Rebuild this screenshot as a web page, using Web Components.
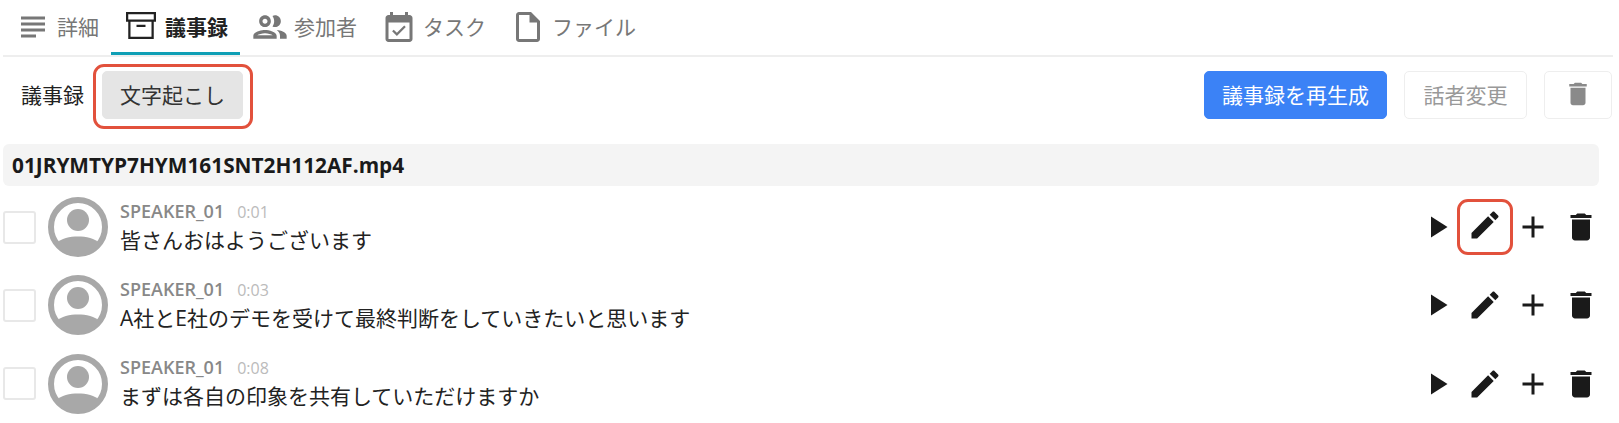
<!DOCTYPE html>
<html lang="ja">
<head>
<meta charset="utf-8">
<title>議事録</title>
<style>
  html, body { margin: 0; height: 423px; overflow: hidden; background: #fff; }
  body { font-family: "Open Sans", "Noto Sans CJK JP", sans-serif; color: #222; }
</style>
</head>
<body>
<minutes-page></minutes-page>

<script>
// Material style icon paths, all on a 24x24 box
const ICONS = {
  subject: 'M14 17H4v2h10v-2zm6-8H4v2h16V9zM4 15h16v-2H4v2zM4 5v2h16V5H4z',
  archive: 'M2 2h20v6.5h-1.5V20h-17V8.5H2V2zm1.5 1.5v3.5h17V3.5h-17zM5 8.5v10h14v-10H5zM9 10.5h6v1.5H9v-1.5z',
  people: 'M9 13.75c-2.34 0-7 1.17-7 3.5V19h14v-1.75c0-2.33-4.66-3.5-7-3.5zM4.34 17c.84-.58 2.87-1.25 4.66-1.25s3.82.67 4.66 1.25H4.34zM9 12c1.93 0 3.5-1.57 3.5-3.5S10.93 5 9 5 5.5 6.57 5.5 8.5 7.07 12 9 12zm0-5c.83 0 1.5.67 1.5 1.5S9.83 10 9 10s-1.5-.67-1.5-1.5S8.17 7 9 7zm7.04 6.81c1.16.84 1.96 1.96 1.96 3.44V19h4v-1.75c0-2.02-3.5-3.17-5.96-3.44zM15 12c1.93 0 3.5-1.57 3.5-3.5S16.93 5 15 5c-.54 0-1.04.13-1.5.35.63.89 1 1.98 1 3.15s-.37 2.26-1 3.15c.46.22.96.35 1.5.35z',
  event: 'M16.53 12.06L15.47 11l-4.88 4.88-2.12-2.12-1.06 1.06L10.59 18l5.94-5.94zM19 4h-1V2h-2v2H8V2H6v2H5c-1.11 0-1.99.9-1.99 2L3 20c0 1.1.89 2 2 2h14c1.1 0 2-.9 2-2V6c0-1.1-.9-2-2-2zm0 16H5V9h14v11z',
  file: 'M14 2H6c-1.1 0-1.99.9-1.99 2L4 20c0 1.1.89 2 1.99 2H18c1.1 0 2-.9 2-2V8l-6-6zM6 20V4h7v5h5v11H6z',
  trash: 'M6 19c0 1.1.9 2 2 2h8c1.1 0 2-.9 2-2V7H6v12zM19 4h-3.5l-1-1h-5l-1 1H5v2h14V4z',
  edit: 'M3 17.25V21h3.75L17.81 9.94l-3.75-3.75L3 17.25zM20.71 7.04c.39-.39.39-1.02 0-1.41l-2.34-2.34c-.39-.39-1.02-.39-1.41 0l-1.83 1.83 3.75 3.75 1.83-1.83z',
  play: 'M8 5v14l11-7z',
  add: 'M19 13h-6v6h-2v-6H5v-2h6V5h2v6h6v2z'
};

class UiIcon extends HTMLElement {
  connectedCallback() {
    const size = this.getAttribute('size') || 24;
    const root = this.shadowRoot || this.attachShadow({ mode: 'open' });
    root.innerHTML = `
      <style>
        :host { display: inline-flex; flex: none; }
        svg { display: block; fill: currentColor; }
      </style>
      <svg width="${size}" height="${size}" viewBox="0 0 24 24"><path d="${ICONS[this.getAttribute('name')]}"/></svg>
    `;
  }
}

class TabItem extends HTMLElement {
  connectedCallback() {
    const root = this.shadowRoot || this.attachShadow({ mode: 'open' });
    const name = this.getAttribute('icon');
    // the people glyph is drawn smaller in its box, so it gets a bigger box
    const size = name === 'people' ? 40 : 36;
    root.innerHTML = `
      <style>
        :host {
          display: flex;
          align-items: center;
          gap: 6px;
          height: 55px;
          box-sizing: border-box;
          padding: 2px 12px 0;
          font-size: 21px;
          white-space: nowrap;
          color: #777;
          border-bottom: 3px solid transparent;
        }
        :host([active]) {
          color: #222;
          font-weight: 700;
          border-bottom-color: #0f9fb5;
        }
        ui-icon[name="people"] { margin: 0 -2px; }
        .label { margin-bottom: 3px; }
      </style>
      <ui-icon name="${name}" size="${size}"></ui-icon>
      <span class="label"><slot></slot></span>
    `;
  }
}

class TabBar extends HTMLElement {
  constructor() {
    super();
    this.attachShadow({ mode: 'open' }).innerHTML = `
      <style>
        :host {
          display: flex;
          height: 57px;
          margin-left: 3px;
          margin-right: 6px;
          border-bottom: 2px solid #eee;
          box-sizing: border-box;
        }
      </style>
      <slot></slot>
    `;
  }
}

class ActionButton extends HTMLElement {
  constructor() {
    super();
    this.attachShadow({ mode: 'open' }).innerHTML = `
      <style>
        :host {
          display: flex;
          align-items: center;
          justify-content: center;
          box-sizing: border-box;
          height: 48px;
          padding-bottom: 2px;
          border-radius: 5px;
          font-size: 21px;
          white-space: nowrap;
          background: #fff;
          color: #999;
          border: 1px solid #eee;
        }
        :host([variant="primary"]) { background: #3b82f6; color: #fff; border-color: #3b82f6; }
        :host([variant="muted"]) { background: #e5e5e5; color: #333; border-color: #e5e5e5; }
      </style>
      <slot></slot>
    `;
  }
}

// Red annotation frame drawn round whatever it wraps
class MarkFrame extends HTMLElement {
  constructor() {
    super();
    this.attachShadow({ mode: 'open' }).innerHTML = `
      <style>
        :host { display: block; position: relative; }
        .frame {
          position: absolute;
          inset: var(--frame-inset, -8px);
          border: 3px solid #e2513c;
          border-radius: 11px;
          pointer-events: none;
        }
      </style>
      <slot></slot>
      <div class="frame"></div>
    `;
  }
}

class Toolbar extends HTMLElement {
  constructor() {
    super();
    this.attachShadow({ mode: 'open' }).innerHTML = `
      <style>
        :host {
          display: flex;
          align-items: center;
          height: 48px;
          margin: 14px 7px 0 21px;
        }
        .label { font-size: 21px; width: 81px; margin-bottom: 2px; }
        .spacer { flex: 1; }
        .right { display: flex; gap: 17px; }
      </style>
      <span class="label"><slot name="label"></slot></span>
      <slot name="left"></slot>
      <span class="spacer"></span>
      <span class="right"><slot name="right"></slot></span>
    `;
  }
}

class FileHeader extends HTMLElement {
  constructor() {
    super();
    this.attachShadow({ mode: 'open' }).innerHTML = `
      <style>
        :host {
          display: flex;
          align-items: center;
          height: 42px;
          margin: 25px 20px 0 3px;
          padding-left: 9px;
          background: #f4f4f4;
          border-radius: 6px;
          font-size: 20.8px;
          font-weight: 700;
          color: #1a1a1a;
        }
      </style>
      <slot></slot>
    `;
  }
}

class TranscriptRow extends HTMLElement {
  connectedCallback() {
    const root = this.shadowRoot || this.attachShadow({ mode: 'open' });
    const marked = this.hasAttribute('marked');
    const edit = '<ui-icon name="edit" size="36"></ui-icon>';
    root.innerHTML = `
      <style>
        :host {
          display: flex;
          align-items: center;
          height: 78.25px;
          margin-right: 20px;
          padding-left: 3px;
          box-sizing: border-box;
        }
        .check {
          width: 33px;
          height: 33px;
          box-sizing: border-box;
          border: 2px solid #e8e8e8;
          border-radius: 3px;
          flex: none;
        }
        .avatar { margin-left: 12px; flex: none; display: block; }
        .body { margin-left: 12px; flex: 1; min-width: 0; }
        .meta { display: flex; align-items: baseline; gap: 13px; line-height: 25px; }
        .speaker { font-size: 18px; font-weight: 600; color: #888; }
        .time { font-size: 16px; color: #bbb; }
        .text { font-size: 21px; line-height: 31px; color: #222; white-space: nowrap; }
        .tools { display: flex; align-items: center; gap: 12px; color: #1a1a1a; }
        mark-frame { --frame-inset: -8px -10px -7px; }
      </style>
      <div class="check"></div>
      <svg class="avatar" width="60" height="60" viewBox="0 0 60 60">
        <circle cx="30" cy="30" r="27" fill="none" stroke="#a8a8a8" stroke-width="6"/>
        <circle cx="30" cy="23" r="11" fill="#a8a8a8"/>
        <path d="M8 47c5-6 14-7.500 22-7.500s17 1.500 22 7.500c-5 7-13 12-22 12S13 54 8 47z" fill="#a8a8a8"/>
      </svg>
      <div class="body">
        <div class="meta"><span class="speaker"><slot name="speaker"></slot></span><span class="time"><slot name="time"></slot></span></div>
        <div class="text"><slot></slot></div>
      </div>
      <div class="tools">
        <ui-icon name="play" size="36"></ui-icon>
        ${marked ? `<mark-frame>${edit}</mark-frame>` : edit}
        <ui-icon name="add" size="36"></ui-icon>
        <ui-icon name="trash" size="36"></ui-icon>
      </div>
    `;
  }
}

class MinutesPage extends HTMLElement {
  constructor() {
    super();
    const rows = [
      ['0:01', '皆さんおはようございます', true],
      ['0:03', 'A社とE社のデモを受けて最終判断をしていきたいと思います', false],
      ['0:08', 'まずは各自の印象を共有していただけますか', false]
    ];
    this.attachShadow({ mode: 'open' }).innerHTML = `
      <style>
        :host { display: block; }
        .rows { margin-top: 2px; }
        .trash { color: #8a8a8a; }
        .first { --frame-inset: -7px -10px -10px -9px; }
      </style>
      <tab-bar>
        <tab-item icon="subject">詳細</tab-item>
        <tab-item icon="archive" active>議事録</tab-item>
        <tab-item icon="people">参加者</tab-item>
        <tab-item icon="event">タスク</tab-item>
        <tab-item icon="file">ファイル</tab-item>
      </tab-bar>
      <minutes-toolbar>
        <span slot="label">議事録</span>
        <mark-frame class="first" slot="left"><action-button variant="muted" style="width:141px">文字起こし</action-button></mark-frame>
        <action-button slot="right" variant="primary" style="width:183px">議事録を再生成</action-button>
        <action-button slot="right" style="width:123px">話者変更</action-button>
        <action-button slot="right" style="width:68px"><ui-icon class="trash" name="trash" size="30"></ui-icon></action-button>
      </minutes-toolbar>
      <file-header>01JRYMTYP7HYM161SNT2H112AF.mp4</file-header>
      <div class="rows">
        ${rows.map(([time, text, marked]) => `
          <transcript-row ${marked ? 'marked' : ''}>
            <span slot="speaker">SPEAKER_01</span>
            <span slot="time">${time}</span>
            ${text}
          </transcript-row>`).join('')}
      </div>
    `;
  }
}

customElements.define('ui-icon', UiIcon);
customElements.define('tab-item', TabItem);
customElements.define('tab-bar', TabBar);
customElements.define('action-button', ActionButton);
customElements.define('mark-frame', MarkFrame);
customElements.define('minutes-toolbar', Toolbar);
customElements.define('file-header', FileHeader);
customElements.define('transcript-row', TranscriptRow);
customElements.define('minutes-page', MinutesPage);
</script>
</body>
</html>
